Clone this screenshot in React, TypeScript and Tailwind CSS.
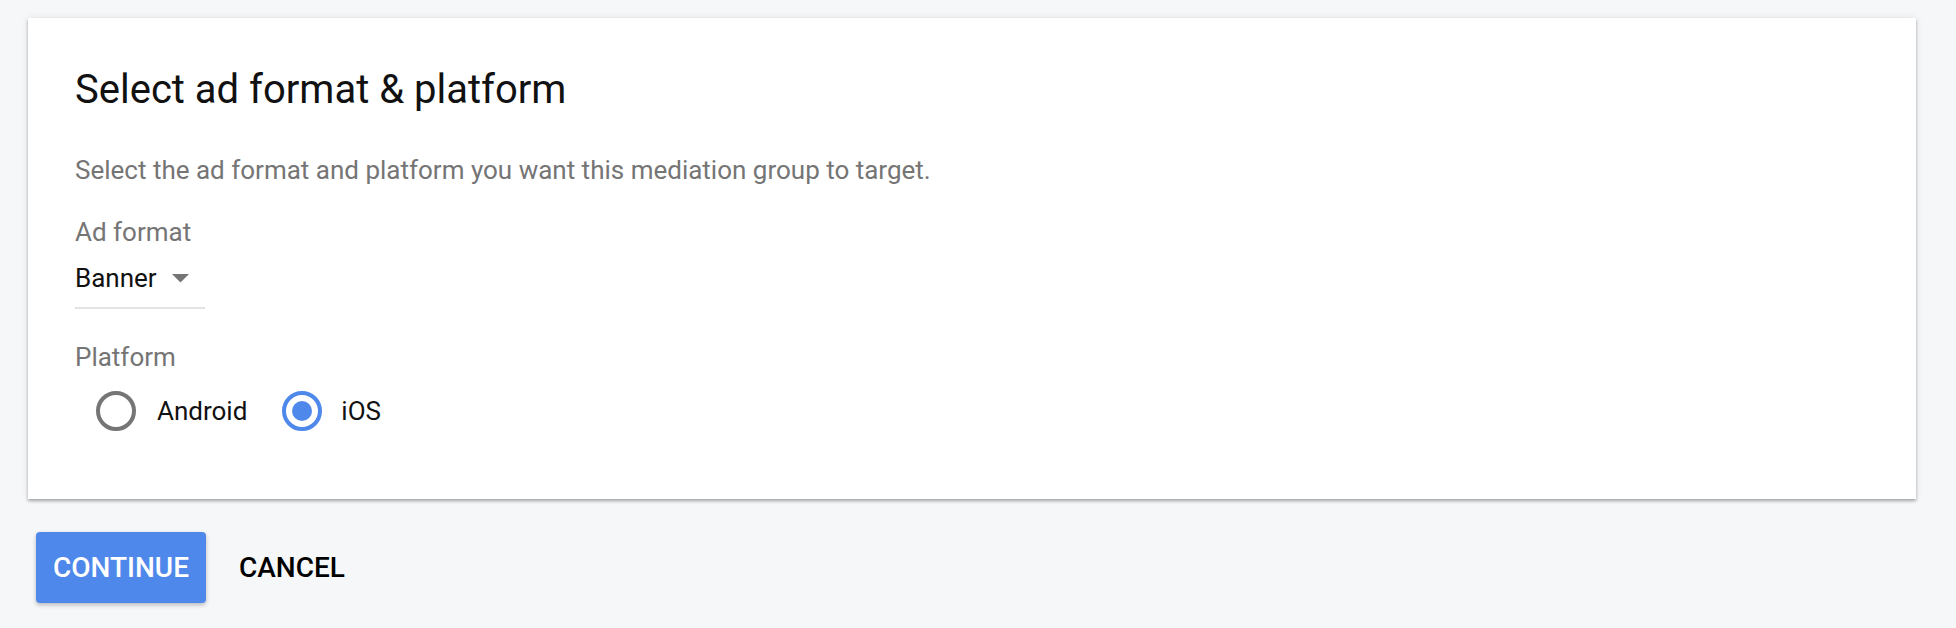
import React from "react";

function Radio({ checked }: { checked: boolean }) {
  return (
    <span
      className={
        checked
          ? "flex h-[40px] w-[40px] items-center justify-center rounded-full border-[4.5px] border-[#4f88eb]"
          : "flex h-[40px] w-[40px] items-center justify-center rounded-full border-[4.5px] border-[#757575]"
      }
    >
      {checked && <span className="h-[20px] w-[20px] rounded-full bg-[#4f88eb]" />}
    </span>
  );
}

export default function App() {
  return (
    <div
      className="min-h-[628px] w-full bg-[#f6f7f9] pl-[28px] pr-[40px] pt-[18px]"
      style={{ fontFamily: "Roboto, 'Noto Sans', Arial, sans-serif" }}
    >
      <div className="h-[481px] bg-white pl-[47px] pt-[48px] shadow-[0_2px_3px_rgba(0,0,0,0.3),0_0_8px_rgba(0,0,0,0.08)]">
        <h1 className="text-[40px] leading-[48px] font-normal text-[#111]">Select ad format &amp; platform</h1>
        <p className="mt-[40px] text-[26px] leading-[32px] text-[#757575]">
          Select the ad format and platform you want this mediation group to target.
        </p>
        <div className="mt-[30px] text-[26px] leading-[32px] text-[#757575]">Ad format</div>
        <div className="mt-[14px] flex w-[130px] items-center border-b-2 border-[#e3e3e3] pb-[13px]">
          <span className="text-[26px] leading-[32px] text-[#111]">Banner</span>
          <svg className="ml-[15px]" width="17" height="9" viewBox="0 0 17 9">
            <path d="M0 0 L17 0 L8.5 8.5 Z" fill="#757575" />
          </svg>
        </div>
        <div className="mt-[32px] text-[26px] leading-[32px] text-[#757575]">Platform</div>
        <div className="mt-[18px] flex h-[40px] items-center pl-[21px]">
          <Radio checked={false} />
          <span className="ml-[21px] text-[26px] leading-[32px] text-[#111]">Android</span>
          <span className="ml-[35px]">
            <Radio checked={true} />
          </span>
          <span className="ml-[19px] text-[26px] leading-[32px] text-[#111]">iOS</span>
        </div>
      </div>
      <div className="mt-[33px] flex items-center pl-[8px]">
        <button className="flex h-[71px] w-[170px] items-center justify-center rounded-[4px] bg-[#4f88eb] text-[28px] font-medium text-white shadow-[0_2px_4px_rgba(0,0,0,0.25)]">
          CONTINUE
        </button>
        <button className="ml-[17px] flex h-[71px] items-center px-[16px] text-[28px] font-medium text-black">
          CANCEL
        </button>
      </div>
    </div>
  );
}
